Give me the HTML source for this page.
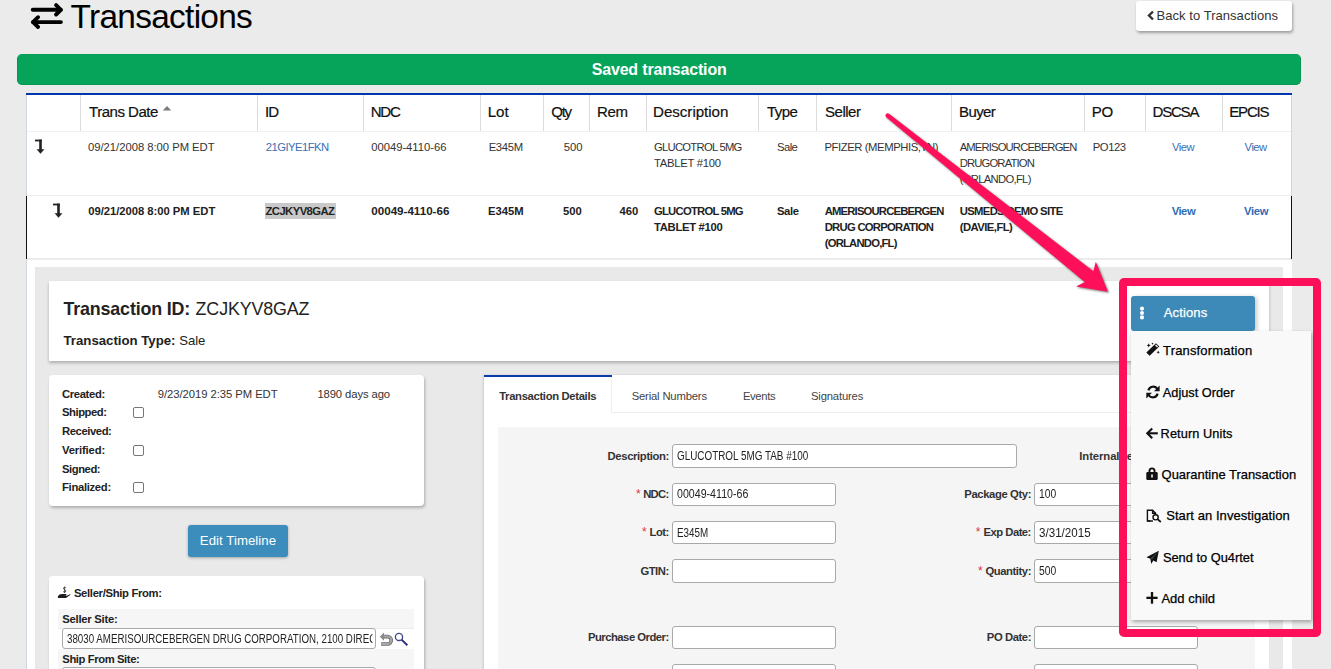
<!DOCTYPE html>
<html><head><meta charset="utf-8"><title>Transactions</title>
<style>
html,body{margin:0;padding:0}
body{width:1331px;height:669px;overflow:hidden;background:#ebebeb;position:relative;font-family:"Liberation Sans",sans-serif}
.a{position:absolute;box-sizing:border-box}
.t{position:absolute;white-space:nowrap;z-index:2}
.hi{z-index:8}
svg{position:absolute;overflow:visible}
.vs{position:absolute;top:95px;width:1px;height:36px;background:#dcdcdc}
.inp{position:absolute;box-sizing:border-box;background:#fff;border:1px solid #a9a9a9;border-radius:3px}
.cb{position:absolute;box-sizing:border-box;width:11px;height:11px;border:1px solid #767676;border-radius:2px;background:#fff}
.clip1{clip-path:inset(-5px -5px -5px 0);}
.hi{-webkit-text-stroke:0.25px currentColor}
.hv{-webkit-text-stroke:0.2px currentColor}

</style></head>
<body>
<!-- title icon -->
<svg style="left:0;top:0" width="80" height="40">
  <g fill="none" stroke="#000" stroke-width="3.9" stroke-linecap="round" stroke-linejoin="round">
    <line x1="32.75" y1="9.8" x2="60.8" y2="9.8"/>
    <polyline points="56.1,5.1 60.8,9.8 56.1,14.5"/>
    <line x1="33" y1="22.1" x2="60.9" y2="22.1"/>
    <polyline points="38.1,17.2 33,22.1 38.1,27"/>
  </g>
</svg>
<!-- back button -->
<div class="a" style="left:1136px;top:1px;width:156px;height:30px;background:#fff;border-radius:3px;box-shadow:1px 2px 3px rgba(0,0,0,.33)"></div>
<svg style="left:1147px;top:10px" width="8" height="11"><polyline points="6,1.5 2,5.5 6,9.5" fill="none" stroke="#333" stroke-width="2.4"/></svg>
<!-- green bar -->
<div class="a" style="left:17px;top:54px;width:1284px;height:31px;background:#06a45a;border-radius:5px;border:1px solid #05964f;border-top-color:#06a05a"></div>
<!-- table -->
<div class="a" style="left:26px;top:93px;width:1266px;height:2px;background:#0336ae"></div>
<div class="a" style="left:26px;top:95px;width:1266px;height:164px;background:#fff"></div>
<div class="a" style="left:26px;top:95px;width:1px;height:101px;background:#cfd6e0"></div>
<div class="a" style="left:1291px;top:95px;width:1px;height:101px;background:#cfd6e0"></div>
<div class="a" style="left:27px;top:131px;width:1264px;height:1px;background:#f0f0f0"></div>
<div class="a" style="left:27px;top:195px;width:1264px;height:1px;background:#eeeeee"></div>
<div class="a" style="left:26px;top:196px;width:1px;height:63px;background:#111"></div>
<div class="a" style="left:1291px;top:196px;width:1px;height:63px;background:#111"></div>
<div class="a" style="left:27px;top:258px;width:1264px;height:2px;background:#ececec"></div>
<div class="vs" style="left:80px"></div><div class="vs" style="left:257px"></div><div class="vs" style="left:363px"></div>
<div class="vs" style="left:480px"></div><div class="vs" style="left:543px"></div><div class="vs" style="left:589px"></div>
<div class="vs" style="left:646px"></div><div class="vs" style="left:758px"></div><div class="vs" style="left:816px"></div>
<div class="vs" style="left:951px"></div><div class="vs" style="left:1084px"></div><div class="vs" style="left:1145px"></div>
<div class="vs" style="left:1222px"></div>
<!-- sort caret -->
<svg style="left:0;top:0" width="200" height="130"><polygon points="162.8,110.6 171.2,110.6 167,106" fill="#7a7a7a"/></svg>
<!-- level-down icons -->
<svg style="left:34.5px;top:138.5px" width="11" height="16"><g fill="#222"><rect x="0" y="0.6" width="6.8" height="1.8"/><rect x="4.2" y="0.6" width="2.6" height="10.4"/><polygon points="1.6,10.2 9.4,10.2 5.5,14.8"/></g></svg>
<svg style="left:53.3px;top:202.5px" width="11" height="16"><g fill="#222"><rect x="0" y="0.6" width="6.8" height="1.8"/><rect x="4.2" y="0.6" width="2.6" height="10.4"/><polygon points="1.6,10.2 9.4,10.2 5.5,14.8"/></g></svg>
<!-- highlight -->
<div class="a" style="left:265px;top:203px;width:71px;height:16px;background:#c9c9c9"></div>
<!-- detail region -->
<div class="a" style="left:26px;top:260px;width:1266px;height:409px;background:#fff"></div>
<div class="a" style="left:26px;top:260px;width:1px;height:409px;background:#cfd6e0"></div>
<div class="a" style="left:35px;top:267px;width:1248px;height:402px;background:#e9e9e9"></div>
<!-- txn id card -->
<div class="a" style="left:49px;top:281px;width:1220px;height:80px;background:#fff;box-shadow:0 2px 3px rgba(0,0,0,.25)"></div>
<!-- timeline card -->
<div class="a" style="left:49px;top:375px;width:375px;height:131px;background:#fff;border-radius:4px;box-shadow:1px 2px 3px rgba(0,0,0,.25)"></div>
<div class="cb" style="left:133px;top:407px"></div>
<div class="cb" style="left:133px;top:445px"></div>
<div class="cb" style="left:133px;top:482px"></div>
<!-- edit timeline -->
<div class="a" style="left:188px;top:525px;width:100px;height:32px;background:#3c8dbc;border-radius:3px;box-shadow:0 1px 3px rgba(0,0,0,.3)"></div>
<!-- seller card -->
<div class="a" style="left:49px;top:576px;width:375px;height:120px;background:#fff;border-radius:4px;box-shadow:1px 2px 3px rgba(0,0,0,.25)"></div>
<div class="a" style="left:58px;top:609px;width:356px;height:20px;background:#f6f6f6;border-bottom:1px solid #ececec"></div>
<div class="a" style="left:58px;top:649px;width:356px;height:20px;background:#f6f6f6"></div>
<div class="inp" style="left:62px;top:628px;width:314px;height:21px;overflow:hidden"></div>
<div class="inp" style="left:62px;top:667px;width:314px;height:21px"></div>
<!-- seller icon -->
<svg style="left:0;top:0" width="100" height="669">
  <path d="M57.9,596.2 Q59,594 62,594 L66,594 Q67,594.6 66,595.4 L63.5,595.6 L66.8,595.7 L70.3,593.9 Q70.6,594.4 70,595 L66.8,597.6 Q66,598.1 65,598.1 L57.9,598.1 Z" fill="#1e1e1e"/>
  <path d="M65.8,587.9 Q65,587.2 64.2,587.4 Q63.1,587.8 63.6,588.9 Q64.1,589.6 65,589.9 Q66.1,590.5 65.6,591.7 Q64.8,592.4 63.3,591.7" fill="none" stroke="#333" stroke-width="0.9"/>
  <line x1="64.6" y1="586.6" x2="64.6" y2="593" stroke="#333" stroke-width="0.8"/>
</svg>
<!-- undo + search icons -->
<svg style="left:0;top:0" width="420" height="669">
  <path d="M382.5,636.6 H387.6 A3.7,3.7 0 0 1 387.6,644 H381" fill="none" stroke="#6e6e6e" stroke-width="3.6"/>
  <path d="M382.5,636.6 H387.6 A3.7,3.7 0 0 1 387.6,644 H381" fill="none" stroke="#a8a8a8" stroke-width="2"/>
  <polygon points="379.8,636.7 384,632.6 384,640.8" fill="#8a8a8a"/>
  <circle cx="399" cy="636.9" r="3.6" fill="none" stroke="#45458f" stroke-width="1.3"/>
  <line x1="401.6" y1="639.6" x2="407.3" y2="645.2" stroke="#2e2e80" stroke-width="2"/>
</svg>
<!-- tab panel -->
<div class="a" style="left:484px;top:375px;width:785px;height:300px;background:#fff;box-shadow:-1px 0 2px rgba(0,0,0,.12)"></div>
<div class="a" style="left:484px;top:375px;width:128px;height:2px;background:#0a3cae"></div>
<div class="a" style="left:611px;top:377px;width:1px;height:36px;background:#eeeeee"></div>
<div class="a" style="left:611px;top:412px;width:658px;height:1px;background:#eeeeee"></div>
<div class="a" style="left:498px;top:427px;width:757px;height:250px;background:#f5f5f5"></div>
<!-- form inputs -->
<div class="inp" style="left:672px;top:444px;width:345px;height:24px"></div>
<div class="inp" style="left:672px;top:483px;width:164px;height:23px"></div>
<div class="inp" style="left:672px;top:521px;width:164px;height:23px"></div>
<div class="inp" style="left:672px;top:559px;width:164px;height:24px"></div>
<div class="inp" style="left:672px;top:626px;width:164px;height:23px"></div>
<div class="inp" style="left:672px;top:664px;width:164px;height:23px"></div>
<div class="inp" style="left:1034px;top:483px;width:164px;height:23px"></div>
<div class="inp" style="left:1034px;top:521px;width:164px;height:23px"></div>
<div class="inp" style="left:1034px;top:559px;width:164px;height:24px"></div>
<div class="inp" style="left:1034px;top:626px;width:164px;height:23px"></div>
<div class="inp" style="left:1034px;top:664px;width:164px;height:23px"></div>

<div class="t " style="left:70.60px;top:0.00px;font-size:33.4px;line-height:33.4px;font-weight:400;color:#000;letter-spacing:-0.701px">Transactions</div>
<div class="t " style="left:1156.60px;top:8.80px;font-size:13.0px;line-height:13.0px;font-weight:400;color:#333;letter-spacing:0.042px">Back to Transactions</div>
<div class="t " style="left:591.70px;top:62.00px;font-size:15.98px;line-height:15.98px;font-weight:700;color:#fff;letter-spacing:-0.157px">Saved transaction</div>
<div class="t hv" style="left:89.00px;top:104.00px;font-size:15.04px;line-height:15.04px;font-weight:400;color:#111;letter-spacing:-0.492px">Trans Date</div>
<div class="t hv" style="left:265.00px;top:104.00px;font-size:15.04px;line-height:15.04px;font-weight:400;color:#111;letter-spacing:-0.876px">ID</div>
<div class="t hv" style="left:370.70px;top:104.00px;font-size:15.04px;line-height:15.04px;font-weight:400;color:#111;letter-spacing:-1.205px">NDC</div>
<div class="t hv" style="left:487.80px;top:104.00px;font-size:15.12px;line-height:15.12px;font-weight:400;color:#111;letter-spacing:-0.103px">Lot</div>
<div class="t hv" style="left:551.30px;top:104.00px;font-size:15.04px;line-height:15.04px;font-weight:400;color:#111;letter-spacing:-1.334px">Qty</div>
<div class="t hv" style="left:597.10px;top:104.00px;font-size:15.04px;line-height:15.04px;font-weight:400;color:#111;letter-spacing:-0.457px">Rem</div>
<div class="t hv" style="left:653.00px;top:104.00px;font-size:15.15px;line-height:15.15px;font-weight:400;color:#111;letter-spacing:-0.031px">Description</div>
<div class="t hv" style="left:767.00px;top:104.00px;font-size:15.04px;line-height:15.04px;font-weight:400;color:#111;letter-spacing:-0.542px">Type</div>
<div class="t hv" style="left:825.00px;top:104.00px;font-size:15.04px;line-height:15.04px;font-weight:400;color:#111;letter-spacing:-0.485px">Seller</div>
<div class="t hv" style="left:959.00px;top:104.00px;font-size:15.04px;line-height:15.04px;font-weight:400;color:#111;letter-spacing:-0.615px">Buyer</div>
<div class="t hv" style="left:1091.80px;top:104.00px;font-size:15.04px;line-height:15.04px;font-weight:400;color:#111;letter-spacing:-0.426px">PO</div>
<div class="t hv" style="left:1152.60px;top:104.00px;font-size:15.04px;line-height:15.04px;font-weight:400;color:#111;letter-spacing:-1.240px">DSCSA</div>
<div class="t hv" style="left:1229.20px;top:104.00px;font-size:15.04px;line-height:15.04px;font-weight:400;color:#111;letter-spacing:-1.171px">EPCIS</div>
<div class="t " style="left:88.00px;top:142.00px;font-size:11.28px;line-height:11.28px;font-weight:400;color:#333;letter-spacing:-0.026px">09/21/2008 8:00 PM EDT</div>
<div class="t " style="left:265.70px;top:142.00px;font-size:11.28px;line-height:11.28px;font-weight:400;color:#3a6fb5;letter-spacing:-0.535px">21GIYE1FKN</div>
<div class="t " style="left:371.20px;top:142.00px;font-size:11.28px;line-height:11.28px;font-weight:400;color:#333;letter-spacing:-0.027px">00049-4110-66</div>
<div class="t " style="left:488.70px;top:142.00px;font-size:11.28px;line-height:11.28px;font-weight:400;color:#333;letter-spacing:-0.328px">E345M</div>
<div class="t " style="left:563.80px;top:142.00px;font-size:11.28px;line-height:11.28px;font-weight:400;color:#333;letter-spacing:-0.065px">500</div>
<div class="t " style="left:654.00px;top:142.00px;font-size:11.28px;line-height:11.28px;font-weight:400;color:#333;letter-spacing:-0.741px">GLUCOTROL 5MG</div>
<div class="t " style="left:654.00px;top:158.00px;font-size:11.28px;line-height:11.28px;font-weight:400;color:#333;letter-spacing:-0.266px">TABLET #100</div>
<div class="t " style="left:777.00px;top:142.00px;font-size:11.28px;line-height:11.28px;font-weight:400;color:#333;letter-spacing:-0.561px">Sale</div>
<div class="t " style="left:824.40px;top:142.00px;font-size:11.28px;line-height:11.28px;font-weight:400;color:#333;letter-spacing:-0.403px">PFIZER (MEMPHIS,TN)</div>
<div class="t " style="left:959.70px;top:142.00px;font-size:11.28px;line-height:11.28px;font-weight:400;color:#333;letter-spacing:-0.864px">AMERISOURCEBERGEN</div>
<div class="t " style="left:959.70px;top:158.00px;font-size:11.28px;line-height:11.28px;font-weight:400;color:#333;letter-spacing:-0.852px">DRUGORATION</div>
<div class="t " style="left:959.70px;top:174.00px;font-size:11.28px;line-height:11.28px;font-weight:400;color:#333;letter-spacing:-0.704px">(ORLANDO,FL)</div>
<div class="t " style="left:1092.80px;top:142.00px;font-size:11.28px;line-height:11.28px;font-weight:400;color:#333;letter-spacing:-0.452px">PO123</div>
<div class="t " style="left:1172.00px;top:142.00px;font-size:11.28px;line-height:11.28px;font-weight:400;color:#3a6fb5;letter-spacing:-0.526px">View</div>
<div class="t " style="left:1244.60px;top:142.00px;font-size:11.28px;line-height:11.28px;font-weight:400;color:#3a6fb5;letter-spacing:-0.526px">View</div>
<div class="t " style="left:88.20px;top:206.40px;font-size:11.28px;line-height:11.28px;font-weight:700;color:#222;letter-spacing:-0.032px">09/21/2008 8:00 PM EDT</div>
<div class="t " style="left:265.50px;top:206.40px;font-size:11.28px;line-height:11.28px;font-weight:700;color:#222;letter-spacing:-0.557px">ZCJKYV8GAZ</div>
<div class="t " style="left:371.30px;top:205.40px;font-size:11.63px;line-height:11.63px;font-weight:700;color:#222;letter-spacing:-0.013px">00049-4110-66</div>
<div class="t " style="left:487.90px;top:206.40px;font-size:11.28px;line-height:11.28px;font-weight:700;color:#222">E345M</div>
<div class="t " style="left:563.10px;top:206.40px;font-size:11.28px;line-height:11.28px;font-weight:700;color:#222;letter-spacing:-0.015px">500</div>
<div class="t " style="left:619.40px;top:206.40px;font-size:11.28px;line-height:11.28px;font-weight:700;color:#222;letter-spacing:0.085px">460</div>
<div class="t " style="left:654.00px;top:206.40px;font-size:11.28px;line-height:11.28px;font-weight:700;color:#222;letter-spacing:-0.760px">GLUCOTROL 5MG</div>
<div class="t " style="left:654.00px;top:222.40px;font-size:11.28px;line-height:11.28px;font-weight:700;color:#222;letter-spacing:-0.302px">TABLET #100</div>
<div class="t " style="left:777.00px;top:206.40px;font-size:11.28px;line-height:11.28px;font-weight:700;color:#222;letter-spacing:-0.403px">Sale</div>
<div class="t " style="left:824.70px;top:206.40px;font-size:11.28px;line-height:11.28px;font-weight:700;color:#222;letter-spacing:-0.816px">AMERISOURCEBERGEN</div>
<div class="t " style="left:824.70px;top:222.40px;font-size:11.28px;line-height:11.28px;font-weight:700;color:#222;letter-spacing:-0.721px">DRUG CORPORATION</div>
<div class="t " style="left:824.70px;top:238.40px;font-size:11.28px;line-height:11.28px;font-weight:700;color:#222;letter-spacing:-0.781px">(ORLANDO,FL)</div>
<div class="t " style="left:959.70px;top:206.40px;font-size:11.28px;line-height:11.28px;font-weight:700;color:#222;letter-spacing:-0.652px">USMEDS DEMO SITE</div>
<div class="t " style="left:959.70px;top:222.40px;font-size:11.28px;line-height:11.28px;font-weight:700;color:#222;letter-spacing:-0.537px">(DAVIE,FL)</div>
<div class="t " style="left:1171.70px;top:206.40px;font-size:11.28px;line-height:11.28px;font-weight:700;color:#2f6db5;letter-spacing:-0.502px">View</div>
<div class="t " style="left:1244.00px;top:206.40px;font-size:11.28px;line-height:11.28px;font-weight:700;color:#2f6db5;letter-spacing:-0.335px">View</div>
<div class="t " style="left:63.50px;top:301.00px;font-size:17.86px;line-height:17.86px;font-weight:700;color:#222;letter-spacing:-0.162px">Transaction ID:</div>
<div class="t " style="left:195.60px;top:301.00px;font-size:17.86px;line-height:17.86px;font-weight:400;color:#222;letter-spacing:-0.134px">ZCJKYV8GAZ</div>
<div class="t " style="left:63.50px;top:333.80px;font-size:13.23px;line-height:13.23px;font-weight:700;color:#222;letter-spacing:-0.009px">Transaction Type:</div>
<div class="t " style="left:179.30px;top:333.80px;font-size:13.16px;line-height:13.16px;font-weight:400;color:#222;letter-spacing:-0.072px">Sale</div>
<div class="t " style="left:62.00px;top:389.30px;font-size:11.28px;line-height:11.28px;font-weight:700;color:#222;letter-spacing:-0.364px">Created:</div>
<div class="t " style="left:62.00px;top:407.20px;font-size:11.28px;line-height:11.28px;font-weight:700;color:#222;letter-spacing:-0.448px">Shipped:</div>
<div class="t " style="left:62.00px;top:425.80px;font-size:11.28px;line-height:11.28px;font-weight:700;color:#222;letter-spacing:-0.422px">Received:</div>
<div class="t " style="left:62.00px;top:445.00px;font-size:11.28px;line-height:11.28px;font-weight:700;color:#222;letter-spacing:-0.162px">Verified:</div>
<div class="t " style="left:62.00px;top:463.90px;font-size:11.28px;line-height:11.28px;font-weight:700;color:#222;letter-spacing:-0.459px">Signed:</div>
<div class="t " style="left:62.00px;top:482.00px;font-size:11.28px;line-height:11.28px;font-weight:700;color:#222;letter-spacing:-0.311px">Finalized:</div>
<div class="t " style="left:157.70px;top:389.30px;font-size:11.28px;line-height:11.28px;font-weight:400;color:#333;letter-spacing:-0.049px">9/23/2019 2:35 PM EDT</div>
<div class="t " style="left:317.40px;top:389.30px;font-size:11.28px;line-height:11.28px;font-weight:400;color:#333;letter-spacing:-0.104px">1890 days ago</div>
<div class="t " style="left:199.80px;top:534.20px;font-size:13.22px;line-height:13.22px;font-weight:400;color:#fff;letter-spacing:0.053px">Edit Timeline</div>
<div class="t " style="left:73.90px;top:587.90px;font-size:11.28px;line-height:11.28px;font-weight:700;color:#222;letter-spacing:-0.320px">Seller/Ship From:</div>
<div class="t " style="left:62.30px;top:613.80px;font-size:11.28px;line-height:11.28px;font-weight:700;color:#222;letter-spacing:-0.253px">Seller Site:</div>
<div class="t " style="left:62.30px;top:653.50px;font-size:11.28px;line-height:11.28px;font-weight:700;color:#222;letter-spacing:-0.414px">Ship From Site:</div>
<div class="t " style="left:499.20px;top:391.20px;font-size:11.28px;line-height:11.28px;font-weight:700;color:#333;letter-spacing:-0.335px">Transaction Details</div>
<div class="t " style="left:631.70px;top:391.20px;font-size:11.28px;line-height:11.28px;font-weight:400;color:#444;letter-spacing:-0.177px">Serial Numbers</div>
<div class="t " style="left:742.90px;top:391.20px;font-size:11.28px;line-height:11.28px;font-weight:400;color:#444;letter-spacing:-0.342px">Events</div>
<div class="t " style="left:811.00px;top:391.20px;font-size:11.28px;line-height:11.28px;font-weight:400;color:#444;letter-spacing:-0.170px">Signatures</div>
<div class="t " style="left:607.60px;top:450.60px;font-size:11.28px;line-height:11.28px;font-weight:700;color:#333;letter-spacing:-0.361px">Description:</div>
<div class="t " style="left:636.00px;top:487.90px;font-size:12.0px;line-height:12.0px;font-weight:400;color:#d9363e">*</div>
<div class="t " style="left:643.20px;top:488.90px;font-size:11.28px;line-height:11.28px;font-weight:700;color:#333;letter-spacing:-0.702px">NDC:</div>
<div class="t " style="left:642.00px;top:526.40px;font-size:12.0px;line-height:12.0px;font-weight:400;color:#d9363e">*</div>
<div class="t " style="left:649.60px;top:527.40px;font-size:11.28px;line-height:11.28px;font-weight:700;color:#333;letter-spacing:-0.505px">Lot:</div>
<div class="t " style="left:640.40px;top:565.60px;font-size:11.28px;line-height:11.28px;font-weight:700;color:#333;letter-spacing:-0.477px">GTIN:</div>
<div class="t " style="left:587.90px;top:632.40px;font-size:11.28px;line-height:11.28px;font-weight:700;color:#333;letter-spacing:-0.495px">Purchase Order:</div>
<div class="t " style="left:1079.30px;top:450.60px;font-size:11.28px;line-height:11.28px;font-weight:700;color:#333;letter-spacing:-0.075px">Internal reference</div>
<div class="t " style="left:964.30px;top:488.90px;font-size:11.28px;line-height:11.28px;font-weight:700;color:#333;letter-spacing:-0.385px">Package Qty:</div>
<div class="t " style="left:975.70px;top:526.40px;font-size:12.0px;line-height:12.0px;font-weight:400;color:#d9363e">*</div>
<div class="t " style="left:983.60px;top:527.40px;font-size:11.28px;line-height:11.28px;font-weight:700;color:#333;letter-spacing:-0.526px">Exp Date:</div>
<div class="t " style="left:977.90px;top:564.60px;font-size:12.0px;line-height:12.0px;font-weight:400;color:#d9363e">*</div>
<div class="t " style="left:985.40px;top:565.60px;font-size:11.28px;line-height:11.28px;font-weight:700;color:#333;letter-spacing:-0.424px">Quantity:</div>
<div class="t " style="left:986.80px;top:632.40px;font-size:11.28px;line-height:11.28px;font-weight:700;color:#333;letter-spacing:-0.418px">PO Date:</div>
<div class="t " style="left:677.00px;top:450.00px;font-size:12.0px;line-height:12.0px;font-weight:400;color:#222;transform:scaleX(0.8242);transform-origin:0 0">GLUCOTROL 5MG TAB #100</div>
<div class="t " style="left:677.00px;top:488.30px;font-size:12.0px;line-height:12.0px;font-weight:400;color:#222;transform:scaleX(0.8857);transform-origin:0 0">00049-4110-66</div>
<div class="t " style="left:677.00px;top:526.80px;font-size:12.0px;line-height:12.0px;font-weight:400;color:#222;transform:scaleX(0.8205);transform-origin:0 0">E345M</div>
<div class="t " style="left:1038.60px;top:488.30px;font-size:12.0px;line-height:12.0px;font-weight:400;color:#222;transform:scaleX(0.8600);transform-origin:0 0">100</div>
<div class="t " style="left:1038.60px;top:526.80px;font-size:12.0px;line-height:12.0px;font-weight:400;color:#222;transform:scaleX(0.9681);transform-origin:0 0">3/31/2015</div>
<div class="t " style="left:1038.60px;top:565.00px;font-size:12.0px;line-height:12.0px;font-weight:400;color:#222;transform:scaleX(0.8600);transform-origin:0 0">500</div>
<div class="t " style="left:66.90px;top:633.20px;font-size:12.0px;line-height:12.0px;font-weight:400;color:#222;transform:scaleX(0.8125);transform-origin:0 0;width:376px;overflow:hidden">38030 AMERISOURCEBERGEN DRUG CORPORATION, 2100 DIREC</div>
<div class="t hi" style="left:1163.70px;top:306.40px;font-size:13.0px;line-height:13.0px;font-weight:400;color:#fff;letter-spacing:0.145px">Actions</div>
<div class="t hi" style="left:1163.00px;top:344.10px;font-size:13.0px;line-height:13.0px;font-weight:400;color:#000;letter-spacing:0.169px">Transformation</div>
<div class="t hi" style="left:1162.80px;top:387.40px;font-size:12.78px;line-height:12.78px;font-weight:400;color:#000">Adjust Order</div>
<div class="t hi" style="left:1160.60px;top:428.10px;font-size:12.77px;line-height:12.77px;font-weight:400;color:#000;letter-spacing:0.085px">Return Units</div>
<div class="t hi" style="left:1161.60px;top:468.90px;font-size:12.94px;line-height:12.94px;font-weight:400;color:#000">Quarantine Transaction</div>
<div class="t hi" style="left:1166.20px;top:509.30px;font-size:13.0px;line-height:13.0px;font-weight:400;color:#000;letter-spacing:0.067px">Start an Investigation</div>
<div class="t hi" style="left:1162.90px;top:552.20px;font-size:12.84px;line-height:12.84px;font-weight:400;color:#000">Send to Qu4rtet</div>
<div class="t hi" style="left:1161.40px;top:592.00px;font-size:13.0px;line-height:13.0px;font-weight:400;color:#000;letter-spacing:0.019px">Add child</div>
<!-- pink box -->
<div class="a" style="left:1119px;top:278px;width:202px;height:359px;border:8px solid #fe0f5a;border-radius:5px;z-index:5"></div>
<!-- actions button -->
<div class="a" style="left:1131px;top:296px;width:124px;height:35px;background:#3d8ab9;border-radius:3px;z-index:6;box-shadow:2px 1px 4px rgba(0,0,0,.22)"></div>
<svg style="left:1139.2px;top:306px;z-index:8" width="6" height="16"><g fill="#fff"><circle cx="3" cy="2.6" r="2.05"/><circle cx="3" cy="7" r="2.05"/><circle cx="3" cy="11.4" r="2.05"/></g></svg>
<!-- menu -->
<div class="a" style="left:1131px;top:331px;width:180px;height:289px;background:#f9f9f9;z-index:6;box-shadow:1px 2px 4px rgba(0,0,0,.32)"></div>
<!-- arrow -->
<svg style="left:0;top:0;z-index:7;filter:drop-shadow(1px 1.5px 1.2px rgba(0,0,0,.55))" width="1331" height="669">
  <path d="M888.91,113.86 L1093.38,271.27 L1095.82,261.82 L1108.00,291.80 L1076.08,286.50 L1084.76,282.05 L886.29,117.14 A2.10,2.10 0 0 1 888.91,113.86 Z" fill="#fe0f5a"/>
</svg>
<!-- menu icons -->
<svg style="left:0;top:0;z-index:8" width="1331" height="669">
  <g fill="#111" stroke="none">
    <!-- wand -->
    <path d="M1146.3,352.4 L1156,343.2 L1159.3,346.5 L1149.6,355.7 Z"/>
    <path d="M1155,345.3 L1156,344.4 L1158.1,346.5 L1157.1,347.4 Z" fill="#f9f9f9"/>
    <path d="M1148.7,343.2 l0.6,1.5 1.5,0.6 -1.5,0.6 -0.6,1.5 -0.6,-1.5 -1.5,-0.6 1.5,-0.6 z"/>
    <path d="M1158.2,350.6 l0.5,1.2 1.2,0.5 -1.2,0.5 -0.5,1.2 -0.5,-1.2 -1.2,-0.5 1.2,-0.5 z"/>
    <path d="M1152.6,342.4 l0.35,0.9 0.9,0.35 -0.9,0.35 -0.35,0.9 -0.35,-0.9 -0.9,-0.35 0.9,-0.35 z"/>
  </g>
  <!-- sync -->
  <g fill="none" stroke="#111" stroke-width="2.2">
    <path d="M1148.4,390.4 A5,5 0 0 1 1157.2,388.6"/>
    <path d="M1157.6,393.6 A5,5 0 0 1 1148.8,395.4"/>
  </g>
  <g fill="#111">
    <polygon points="1159.6,385.5 1159.6,391.3 1154,391.3"/>
    <polygon points="1146.3,398.6 1146.3,392.8 1152,392.8"/>
  </g>
  <!-- arrow left -->
  <g fill="none" stroke="#111" stroke-width="2.1" stroke-linejoin="miter">
    <line x1="1147.5" y1="433.3" x2="1157.8" y2="433.3"/>
    <polyline points="1152.2,428.4 1147.3,433.3 1152.2,438.2"/>
  </g>
  <!-- lock -->
  <path d="M1148.5,472.5 v-1.6 a3.5,3.5 0 0 1 7,0 v1.6 h-1.9 v-1.6 a1.6,1.6 0 0 0 -3.2,0 v1.6 z" fill="#111"/>
  <rect x="1146.3" y="472" width="11.4" height="8" rx="1.2" fill="#111"/>
  <rect x="1151.2" y="474.5" width="1.6" height="3" fill="#f9f9f9"/>
  <!-- doc search -->
  <g fill="none" stroke="#111" stroke-width="1.4">
    <path d="M1150.5,521 H1147.4 V510.2 H1152.6 L1155.6,513.2 V515"/>
    <path d="M1152.6,510.2 V513.2 H1155.6"/>
    <circle cx="1155.6" cy="517.3" r="2.6"/>
    <line x1="1157.5" y1="519.2" x2="1160.8" y2="522" stroke-width="1.7"/>
    <line x1="1147.4" y1="521" x2="1153" y2="521"/>
  </g>
  <!-- paper plane -->
  <path d="M1158.8,550.8 L1146.4,557.3 L1150.3,558.8 L1151.3,564 L1153.3,560.6 L1156.6,562.3 Z" fill="#111"/>
  <path d="M1150.3,558.8 L1158.3,551.5 L1152,559.5 Z" fill="#444"/>
  <!-- plus -->
  <g fill="#111">
    <rect x="1146.4" y="596.7" width="11.2" height="2.3"/>
    <rect x="1150.85" y="592" width="2.3" height="11.7"/>
  </g>
</svg>

</body></html>
